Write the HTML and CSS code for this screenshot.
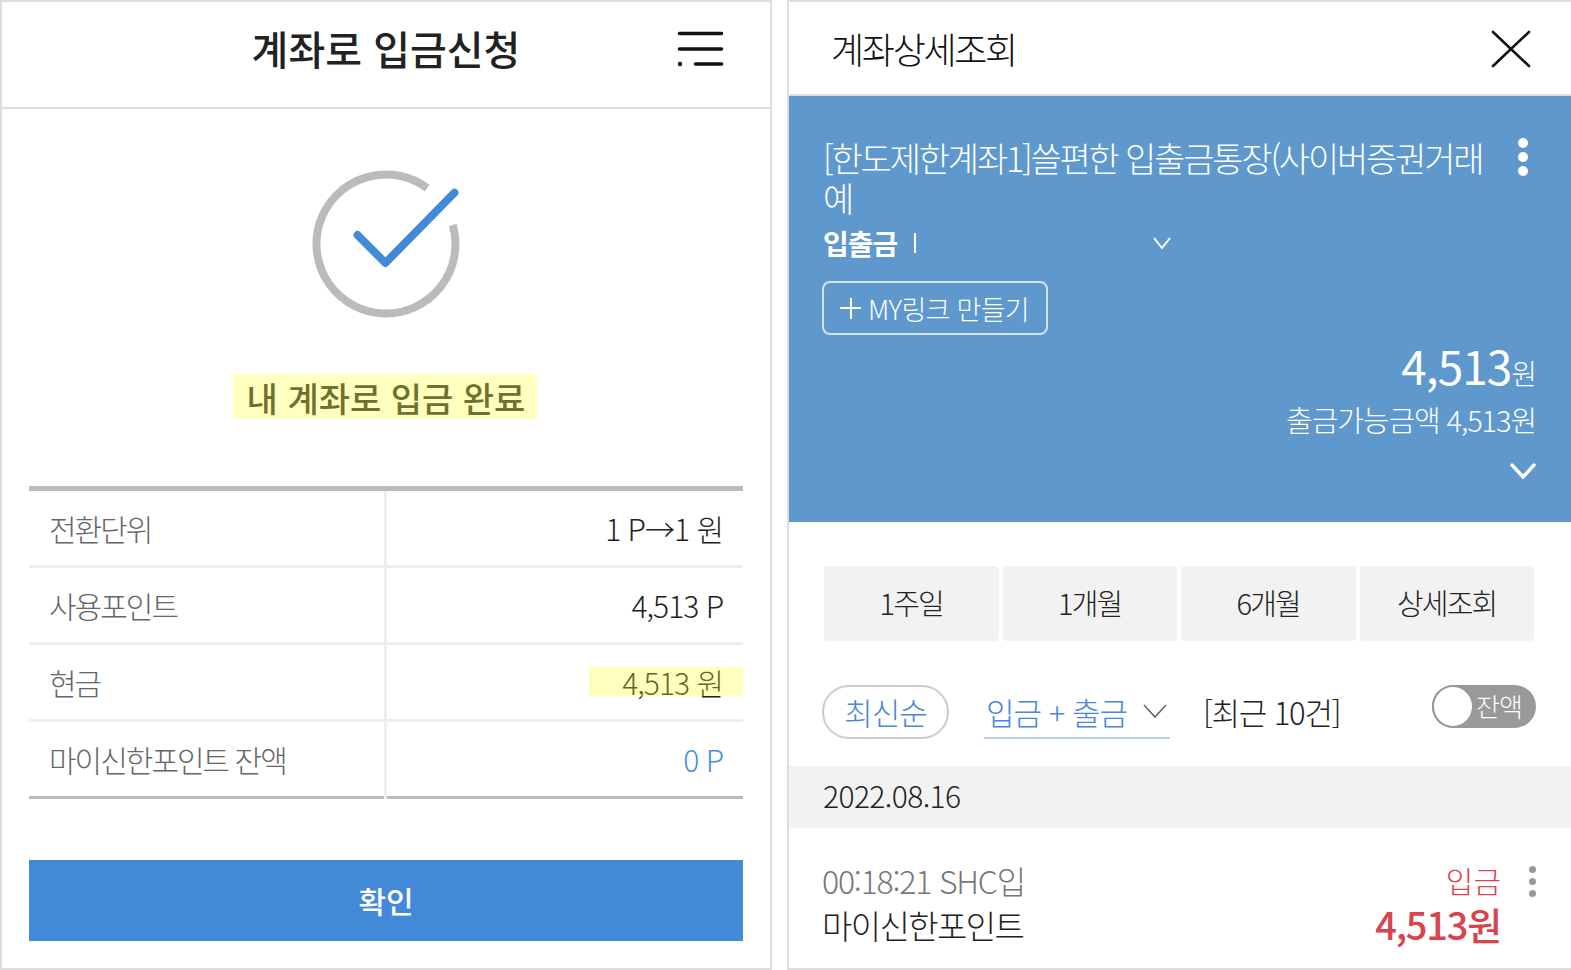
FILE: index.html
```html
<!DOCTYPE html>
<html lang="ko">
<head>
  <meta charset="UTF-8">
  <title>계좌로 입금신청</title>
  <link rel="stylesheet" href="styles.css">
</head>
<body>

  <div class="panel left">
    <div class="left-head">
      <h1>계좌로 입금신청</h1>
      <svg class="menu" width="48" height="36" viewBox="0 0 48 36">
        <path d="M3.5 2.5H45.5M3.5 18H45.5M19.5 33H45.5" stroke="#111" stroke-width="3.6" stroke-linecap="round" fill="none"/>
        <circle cx="4" cy="33" r="2.2" fill="#111"/>
      </svg>
    </div>

    <svg class="check" width="150" height="150" viewBox="0 0 150 150">
      <path d="M116.2 19A69.5 69.5 0 1 0 141.8 55.9" stroke="#bbb" stroke-width="8" fill="none"/>
      <path d="M46.5 66L74.4 94L143.4 23.7" stroke="#4289d8" stroke-width="8" stroke-linecap="round" stroke-linejoin="round" fill="none"/>
    </svg>

    <div class="done-wrap"><span class="done hl">내 계좌로 입금 완료</span></div>

    <div class="info">
      <div class="row">
        <div class="key">전환단위</div>
        <div class="val">1 P→1 원</div>
      </div>
      <div class="row">
        <div class="key">사용포인트</div>
        <div class="val">4,513 P</div>
      </div>
      <div class="row">
        <div class="key">현금</div>
        <div class="val cash hl">4,513 원</div>
      </div>
      <div class="row last">
        <div class="key">마이신한포인트 잔액</div>
        <div class="val blue">0 P</div>
      </div>
    </div>

    <button class="ok">확인</button>
  </div>

  <div class="panel right">
    <div class="right-head">
      <h2>계좌상세조회</h2>
      <svg class="close" width="40" height="38" viewBox="0 0 40 38">
        <path d="M2 2L38 36M38 2L2 36" stroke="#111" stroke-width="2.6" stroke-linecap="round" fill="none"/>
      </svg>
    </div>

    <div class="account">
      <div class="acc-top">
        <div class="acc-name">[한도제한계좌1]쓸편한 입출금통장(사이버증권거래<br>예</div>
        <div class="kebab white"><i></i><i></i><i></i></div>
      </div>
      <div class="acc-type">
        <b>입출금</b>
        <span class="bar"></span>
        <svg width="20" height="14" viewBox="0 0 20 14"><path d="M2 2L10 12L18 2" stroke="#fff" stroke-width="2" fill="none"/></svg>
      </div>
      <div class="mylink"><span class="plus"></span>MY링크 만들기</div>
      <div class="balance">4,513<small>원</small></div>
      <div class="avail">출금가능금액 4,513원</div>
      <div class="more">
        <svg width="28" height="18" viewBox="0 0 28 18"><path d="M3 3L14 15L25 3" stroke="#fff" stroke-width="3.4" stroke-linecap="round" fill="none"/></svg>
      </div>
    </div>

    <div class="periods">
      <div>1주일</div>
      <div>1개월</div>
      <div>6개월</div>
      <div>상세조회</div>
    </div>

    <div class="filters">
      <div class="pill">최신순</div>
      <div class="select">
        입금 + 출금
        <svg width="26" height="16" viewBox="0 0 26 16"><path d="M2 2L13 14L24 2" stroke="#666" stroke-width="1.6" fill="none"/></svg>
      </div>
      <div class="recent">[최근 10건]</div>
      <div class="toggle"><span class="knob"></span>잔액</div>
    </div>

    <div class="date">2022.08.16</div>

    <div class="tx">
      <div class="tx-left">
        <div class="tx-time">00:18:21 SHC입</div>
        <div class="tx-name">마이신한포인트</div>
      </div>
      <div class="tx-right">
        <div class="tx-type">입금</div>
        <div class="tx-amt">4,513원</div>
      </div>
      <div class="kebab grey"><i></i><i></i><i></i></div>
    </div>
  </div>

</body>
</html>
```

FILE: styles.css
```css
* {
  box-sizing: border-box;
}
html, body {
  height: 970px;
  overflow: hidden;
}
body {
  margin: 0;
  display: flex;
  gap: 15px;
  background-color: #fff;
  color: #222;
  font-family: "Noto Sans CJK KR", "Noto Sans", sans-serif;
}
h1, h2 {
  margin: 0;
}
.panel {
  height: 970px;
  border: 2px solid #ddd;
  flex: none;
}
.left {
  width: 772px;
  display: flex;
  flex-direction: column;
  align-items: center;
}
.right {
  width: 784px;
  border-right: none;
}

/* left panel */
.left-head {
  width: 100%;
  height: 107px;
  border-bottom: 2px solid #ddd;
  position: relative;
  display: flex;
  align-items: center;
  justify-content: center;
}
.left-head h1 {
  font-size: 40px;
  font-weight: 500;
  line-height: 1;
  margin-top: -13px;
  color: #222;
}
.menu {
  position: absolute;
  right: 46px;
  top: 29px;
}
.check {
  margin-top: 60px;
}
.done-wrap {
  margin: 55px 0 0 -3px;
}
.done {
  display: block;
  width: 304px;
  height: 45px;
  padding-left: 3px;
  line-height: 47px;
  text-align: center;
  font-size: 34px;
  font-weight: 500;
  color: #333;
}
.hl {
  position: relative;
}
.hl::after {
  content: "";
  position: absolute;
  inset: 0;
  background-color: rgba(255, 255, 40, 0.3);
}
.info {
  width: 714px;
  margin-top: 67px;
  border-top: 5px solid #bbb;
}
.row {
  display: grid;
  grid-template-columns: 355px 3px 356px;
  height: 77px;
  align-items: center;
  border-bottom: 3px solid #eee;
  font-size: 30px;
  font-weight: 300;
  line-height: 44px;
}
.row.last {
  border-bottom: 3px solid #bbb;
}
.key {
  grid-column: 1;
  padding-left: 20px;
  color: #666;
  letter-spacing: -2px;
}
.row::before {
  content: "";
  grid-column: 2;
  grid-row: 1;
  align-self: stretch;
  margin-bottom: -3px;
  background-color: #eee;
}
.val {
  grid-column: 3;
  text-align: right;
  padding-right: 20px;
  color: #222;
  letter-spacing: -1px;
}
.cash::after {
  left: auto;
  width: 154px;
  top: 7px;
  bottom: auto;
  height: 29px;
}
.blue {
  color: #4a8fdc;
}
.ok {
  width: 714px;
  height: 81px;
  margin-top: 61px;
  padding-bottom: 3px;
  background-color: #4289d8;
  color: #fff;
  border: none;
  font-family: inherit;
  font-size: 30px;
  font-weight: 500;
}

/* right panel */
.right-head {
  height: 94px;
  border-bottom: 2px solid #ddd;
  padding: 0 40px 0 42px;
  display: flex;
  align-items: center;
  justify-content: space-between;
}
.right-head h2 {
  font-size: 36px;
  font-weight: 300;
  letter-spacing: -2.3px;
  color: #111;
}
.close {
  margin-top: 2px;
}
.account {
  height: 426px;
  background-color: #5e98cd;
  color: #fff;
  padding: 42px 35px 0 34px;
}
.acc-top {
  display: flex;
  justify-content: space-between;
}
.acc-name {
  font-size: 34px;
  font-weight: 300;
  line-height: 40px;
  letter-spacing: -2.2px;
}
.kebab i {
  display: block;
  border-radius: 50%;
}
.kebab.white {
  margin-right: 8px;
}
.kebab.white i {
  width: 10px;
  height: 10px;
  margin-bottom: 4px;
  background-color: #fff;
}
.acc-type {
  display: flex;
  align-items: center;
  margin-top: 7px;
  height: 36px;
  font-size: 28px;
}
.acc-type b {
  font-weight: 700;
  letter-spacing: -1px;
}
.bar {
  width: 2px;
  height: 20px;
  margin-left: 17px;
  background-color: #fff;
}
.acc-type svg {
  margin-left: 236px;
}
.mylink {
  display: flex;
  align-items: center;
  gap: 7px;
  width: 226px;
  height: 54px;
  margin: 20px 0 0 -1px;
  padding-left: 16px;
  border: 2px solid #d3e3f2;
  border-radius: 8px;
  font-size: 27px;
  font-weight: 300;
  letter-spacing: -0.7px;
  white-space: nowrap;
}
.plus {
  position: relative;
  width: 21px;
  height: 21px;
  background:
    linear-gradient(#fff, #fff) center / 100% 2px no-repeat,
    linear-gradient(#fff, #fff) center / 2px 100% no-repeat;
}
.balance {
  text-align: right;
  font-size: 46px;
  line-height: 52px;
  margin-top: 4px;
  letter-spacing: -1px;
}
.balance small {
  font-size: 28px;
  font-weight: 300;
}
.avail {
  text-align: right;
  font-size: 29px;
  font-weight: 300;
  line-height: 40px;
  letter-spacing: -1.1px;
}
.more {
  text-align: right;
  margin: 22px -1px 0 0;
}
.periods {
  display: grid;
  grid-template-columns: repeat(4, 1fr);
  gap: 4px;
  margin: 44px 37px 0 35px;
}
.periods div {
  height: 75px;
  line-height: 73px;
  text-align: center;
  background-color: #f2f2f2;
  border-radius: 4px;
  font-size: 29px;
  font-weight: 300;
  letter-spacing: -1.8px;
}
.filters {
  display: flex;
  margin: 44px 35px 0 33px;
  height: 81px;
}
.pill {
  width: 127px;
  height: 54px;
  border: 2px solid #ccc;
  border-radius: 27px;
  color: #4a87d8;
  font-size: 31px;
  font-weight: 300;
  line-height: 50px;
  text-align: center;
  letter-spacing: -1px;
}
.select {
  display: flex;
  align-items: center;
  justify-content: space-between;
  width: 186px;
  height: 54px;
  margin-left: 35px;
  padding: 0 2px;
  border-bottom: 2px solid #b9cdee;
  color: #4a87d8;
  font-size: 31px;
  font-weight: 300;
  letter-spacing: -1px;
  white-space: nowrap;
}
.recent {
  margin-left: 33px;
  font-size: 31px;
  font-weight: 300;
  line-height: 54px;
  letter-spacing: -1.2px;
  white-space: nowrap;
}
.toggle {
  position: relative;
  width: 104px;
  height: 43px;
  margin-left: auto;
  border-radius: 22px;
  background-color: #999;
  color: #fff;
  font-size: 26px;
  font-weight: 300;
  line-height: 42px;
  padding-left: 44px;
  letter-spacing: -1px;
}
.knob {
  position: absolute;
  left: 0;
  top: 0;
  width: 42px;
  height: 43px;
  border: 2px solid #999;
  border-radius: 50%;
  background-color: #fff;
}
.date {
  height: 62px;
  line-height: 58px;
  padding-left: 34px;
  background-color: #f2f2f2;
  font-size: 30px;
  font-weight: 300;
  letter-spacing: -0.6px;
}
.tx {
  display: flex;
  padding: 30px 0 0 33px;
}
.tx-left {
  flex: 1;
}
.tx-time {
  font-size: 32px;
  font-weight: 300;
  line-height: 44px;
  color: #777;
  letter-spacing: -1.2px;
}
.tx-name {
  font-size: 33px;
  font-weight: 300;
  line-height: 46px;
  letter-spacing: -1.6px;
}
.tx-right {
  text-align: right;
}
.tx-type {
  font-size: 30px;
  font-weight: 300;
  line-height: 44px;
  color: #e04050;
}
.tx-amt {
  font-size: 38px;
  font-weight: 500;
  line-height: 43px;
  color: #d8434e;
  letter-spacing: -1.2px;
}
.kebab.grey {
  margin: 8px 35px 0 28px;
}
.kebab.grey i {
  width: 7px;
  height: 7px;
  margin-bottom: 5px;
  background-color: #999;
}
```
